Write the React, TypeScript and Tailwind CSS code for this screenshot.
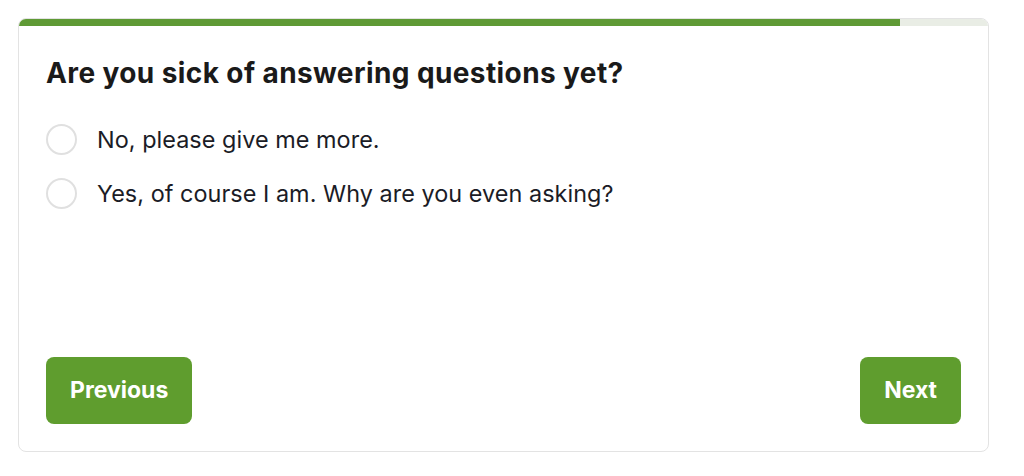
import React from "react";

const options = [
  { id: "more", label: "No, please give me more." },
  { id: "yes", label: "Yes, of course I am. Why are you even asking?" },
];

const App = () => {
  return (
    <div
      className="w-[1024px] h-[476px] bg-white pt-[18px] pl-[18px]"
      style={{ fontFamily: "Inter, 'Noto Sans', sans-serif" }}
    >
      <div className="w-[971px] h-[434px] border border-[#e3e3e3] rounded-lg overflow-hidden flex flex-col">
        <div className="h-[7px] bg-[#e9ede5] flex">
          <div className="w-[881px] h-full bg-[#5f9a35]" />
        </div>
        <div className="flex-1 flex flex-col pl-[27px] pr-[27px] pt-[31px] pb-[27px]">
          <h1 className="text-[28px] leading-8 font-bold text-[#1a1a1a] tracking-[0.4px]">
            Are you sick of answering questions yet?
          </h1>
          <div className="mt-[35px] flex flex-col gap-[23px]">
            {options.map((o) => (
              <label key={o.id} className="flex items-center gap-[20px] cursor-pointer">
                <span className="w-[31px] h-[31px] rounded-full border-2 border-[#e0e0e0] bg-white" />
                <span className="text-[23.4px] leading-[31px] text-[#1b1c26] tracking-[0.05px]">{o.label}</span>
              </label>
            ))}
          </div>
          <div className="mt-auto flex justify-between">
            <button className="h-[67px] px-[24px] rounded-lg bg-[#5f9d2e] text-white text-[23px] font-bold">
              Previous
            </button>
            <button className="h-[67px] px-[24px] rounded-lg bg-[#5f9d2e] text-white text-[23px] font-bold">
              Next
            </button>
          </div>
        </div>
      </div>
    </div>
  );
};

export default App;
